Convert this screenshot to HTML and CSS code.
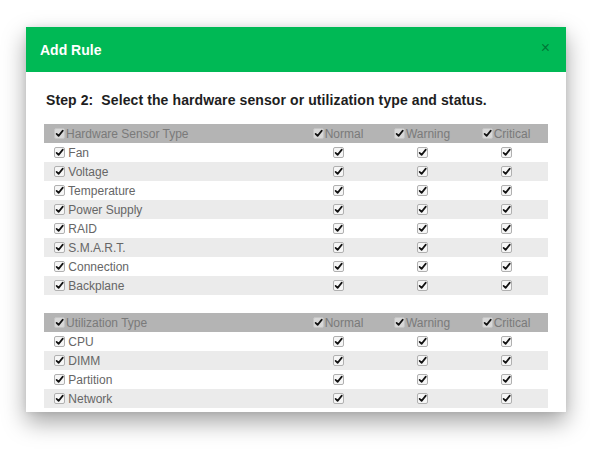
FILE: index.html
```html
<!DOCTYPE html>
<html>
<head>
<meta charset="utf-8">
<link rel="stylesheet" href="styles.css">
</head>
<body>
<div class="modal">
  <div class="modal-header">
    <span class="modal-title">Add Rule</span>
    <span class="close">×</span>
  </div>
  <div class="modal-body">
    <h4 class="step">Step 2:&nbsp; Select the hardware sensor or utilization type and status.</h4>
    <table class="rules">
      <thead>
        <tr><th class="name"><span class="cb"></span>Hardware Sensor Type</th><th><span class="cb"></span>Normal</th><th><span class="cb"></span>Warning</th><th><span class="cb"></span>Critical</th></tr>
      </thead>
      <tbody>
        <tr><td class="name"><span class="cb"></span> Fan</td><td><span class="cb"></span></td><td><span class="cb"></span></td><td><span class="cb"></span></td></tr>
        <tr><td class="name"><span class="cb"></span> Voltage</td><td><span class="cb"></span></td><td><span class="cb"></span></td><td><span class="cb"></span></td></tr>
        <tr><td class="name"><span class="cb"></span> Temperature</td><td><span class="cb"></span></td><td><span class="cb"></span></td><td><span class="cb"></span></td></tr>
        <tr><td class="name"><span class="cb"></span> Power Supply</td><td><span class="cb"></span></td><td><span class="cb"></span></td><td><span class="cb"></span></td></tr>
        <tr><td class="name"><span class="cb"></span> RAID</td><td><span class="cb"></span></td><td><span class="cb"></span></td><td><span class="cb"></span></td></tr>
        <tr><td class="name"><span class="cb"></span> S.M.A.R.T.</td><td><span class="cb"></span></td><td><span class="cb"></span></td><td><span class="cb"></span></td></tr>
        <tr><td class="name"><span class="cb"></span> Connection</td><td><span class="cb"></span></td><td><span class="cb"></span></td><td><span class="cb"></span></td></tr>
        <tr><td class="name"><span class="cb"></span> Backplane</td><td><span class="cb"></span></td><td><span class="cb"></span></td><td><span class="cb"></span></td></tr>
      </tbody>
    </table>
    <table class="rules second">
      <thead>
        <tr><th class="name"><span class="cb"></span>Utilization Type</th><th><span class="cb"></span>Normal</th><th><span class="cb"></span>Warning</th><th><span class="cb"></span>Critical</th></tr>
      </thead>
      <tbody>
        <tr><td class="name"><span class="cb"></span> CPU</td><td><span class="cb"></span></td><td><span class="cb"></span></td><td><span class="cb"></span></td></tr>
        <tr><td class="name"><span class="cb"></span> DIMM</td><td><span class="cb"></span></td><td><span class="cb"></span></td><td><span class="cb"></span></td></tr>
        <tr><td class="name"><span class="cb"></span> Partition</td><td><span class="cb"></span></td><td><span class="cb"></span></td><td><span class="cb"></span></td></tr>
        <tr><td class="name"><span class="cb"></span> Network</td><td><span class="cb"></span></td><td><span class="cb"></span></td><td><span class="cb"></span></td></tr>
      </tbody>
    </table>
  </div>
</div>
</body>
</html>
```
FILE: styles.css
```css
html, body {
  margin: 0;
  padding: 0;
  background: #ffffff;
}
body {
  font-family: "Liberation Sans", Arial, sans-serif;
  padding: 27px 0 0 26px;
  min-height: 450px;
  box-sizing: border-box;
}
.modal {
  width: 540px;
  background: #ffffff;
  box-shadow: 0 10px 22px rgba(0, 0, 0, 0.36), 0 0 6px rgba(0, 0, 0, 0.08);
}
.modal-header {
  height: 45px;
  background: #00b955;
  display: flex;
  align-items: center;
  justify-content: space-between;
  padding: 0 16px 0 14px;
}
.modal-title {
  color: #ffffff;
  font-size: 14px;
  font-weight: bold;
  line-height: 20px;
}
.close {
  color: rgba(0, 0, 0, 0.38);
  font-size: 16px;
  line-height: 16px;
  margin-top: -4px;
}
.modal-body {
  padding: 18px 18px 4px 18px;
}
.step {
  margin: 0 0 14px 2px;
  font-size: 14px;
  font-weight: bold;
  line-height: 20px;
  letter-spacing: 0.1px;
  color: #1e1e1e;
}
.rules {
  width: 504px;
  border-collapse: collapse;
  table-layout: fixed;
  font-size: 12px;
}
.rules.second {
  margin-top: 18px;
}
.rules th, .rules td {
  height: 19px;
  padding: 1px 0 0 0;
  box-sizing: border-box;
  text-align: center;
  font-weight: normal;
  white-space: nowrap;
}
.rules th {
  background: #b4b4b4;
  color: #7a7a7a;
  width: 84px;
}
.rules th.name, .rules td.name {
  width: 252px;
  text-align: left;
  padding-left: 10px;
}
.rules td {
  color: #666666;
}
.rules tbody tr:nth-child(even) td {
  background: #ebebeb;
}
.cb {
  display: inline-block;
  width: 9px;
  height: 9px;
  border: 1px solid #b0b0b0;
  border-radius: 2px;
  background-color: #f6f6f6;
  background-image: url("data:image/svg+xml;utf8,<svg xmlns='http://www.w3.org/2000/svg' viewBox='0 0 9 9'><path d='M1.6 4.8 L3.6 6.9 L7.8 1.6' fill='none' stroke='%23111' stroke-width='1.7' stroke-linecap='round' stroke-linejoin='round'/></svg>");
  background-size: 9px 9px;
  vertical-align: -1px;
}
th .cb {
  border-color: #c4c4c4;
  background-color: #d8d8d8;
  margin-right: 1px;
}
```
